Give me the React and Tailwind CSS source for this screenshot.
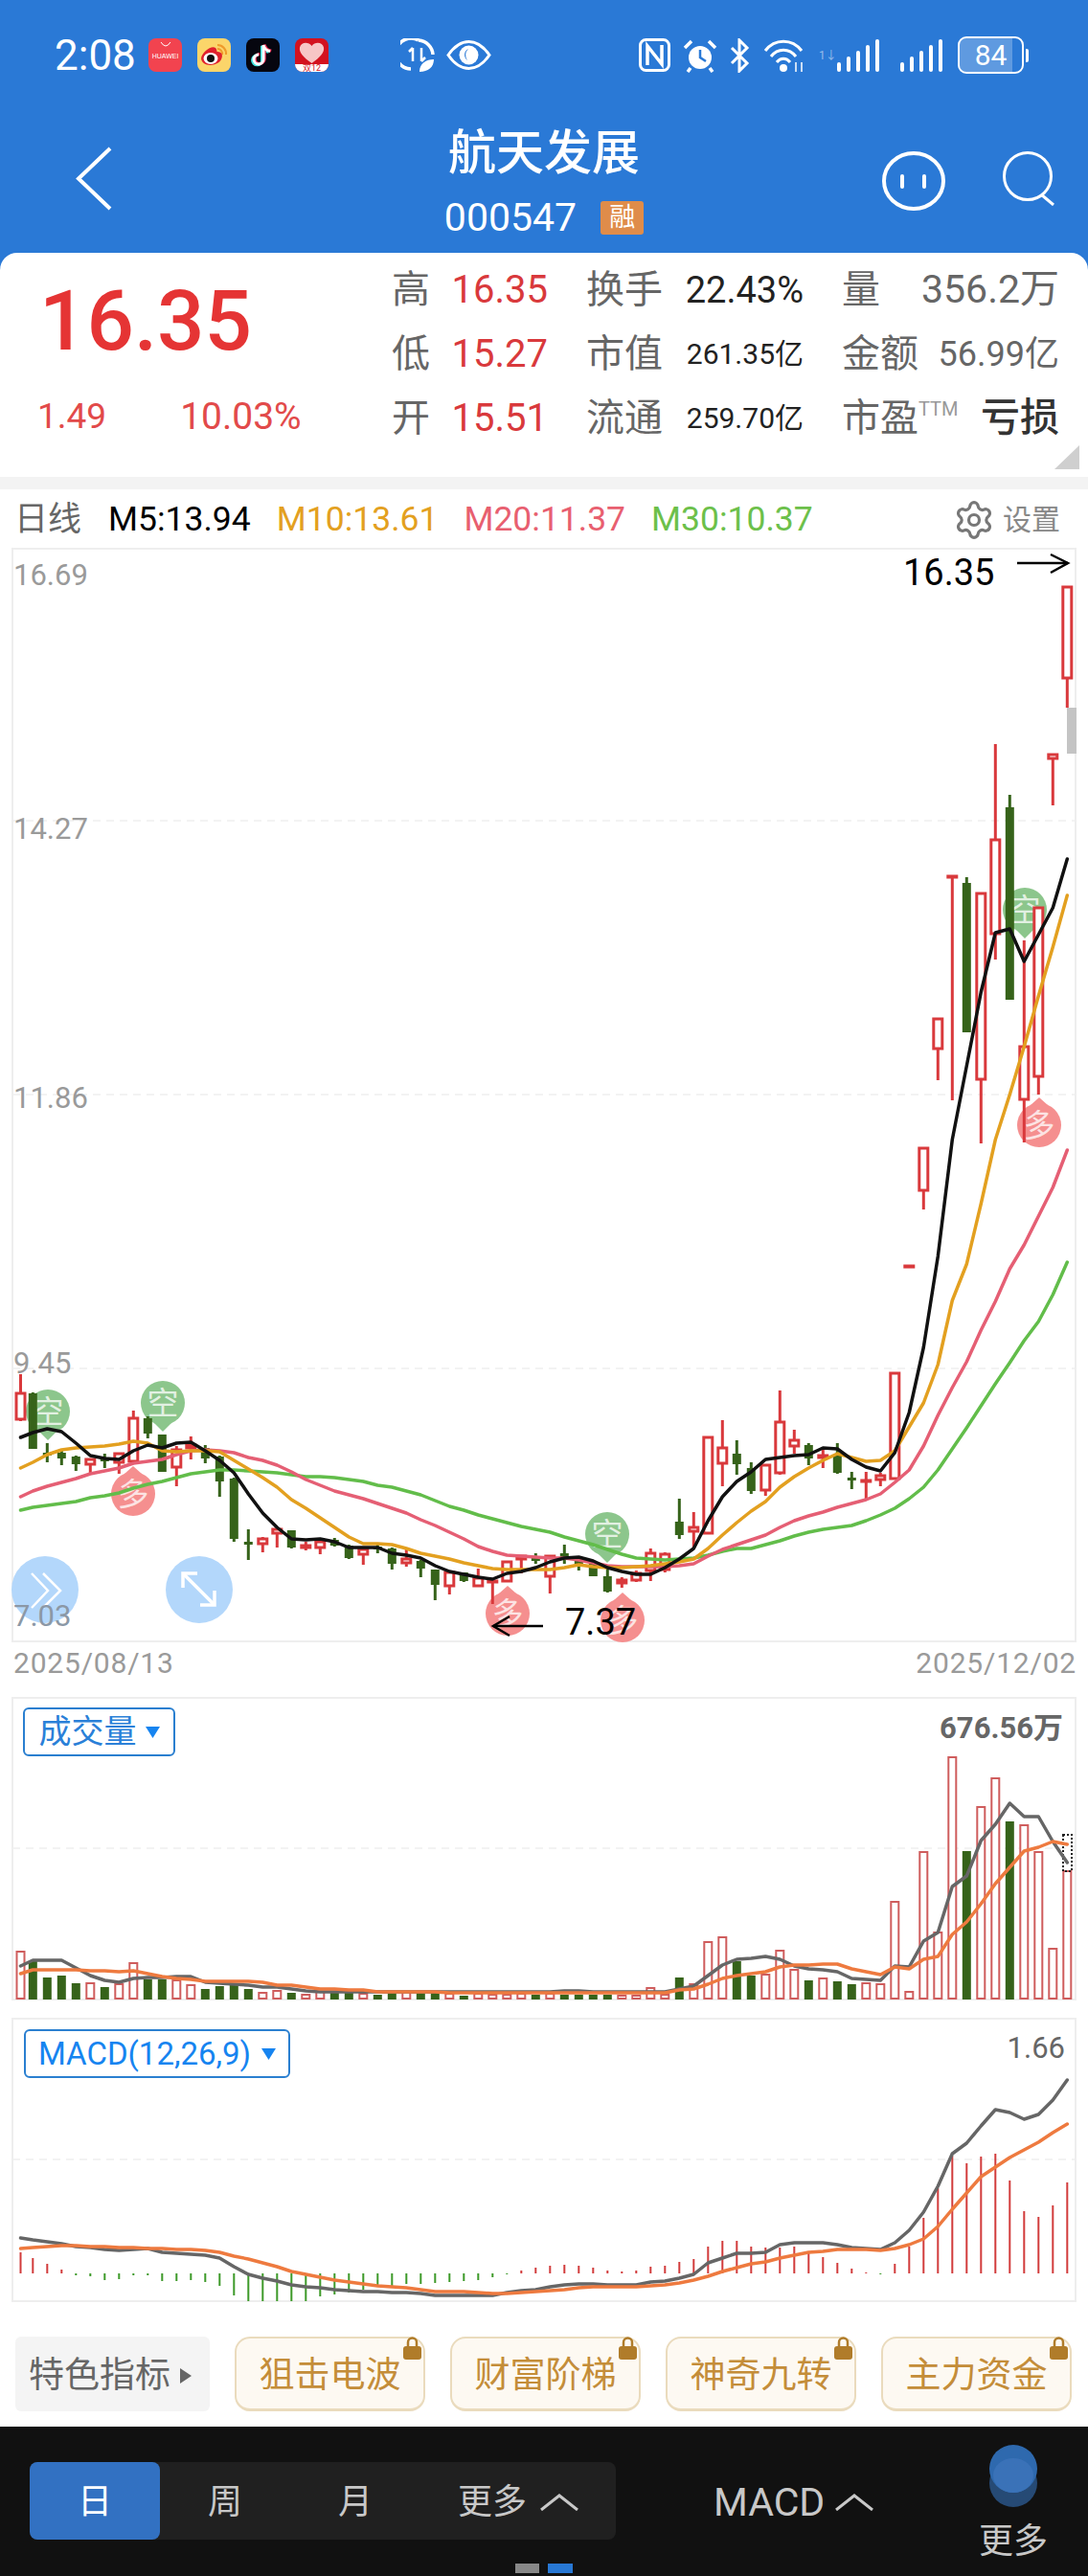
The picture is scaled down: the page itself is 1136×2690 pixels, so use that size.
import { Settings } from 'lucide-react';

const RED = '#d9393c';
const GREEN = '#36631a';

// x of the nth bar, the first one sits a bit off the 15px step
const barX = (i) => (i === 0 ? 21.5 : 19.3 + 15 * i);

// [high, top, bottom, low, colour]
const candles = [
  [1435, 1454, 1483, 1484, 'r'], [1454, 1455, 1513, 1513, 'g'], [1507, 1517, 1519, 1527, 'g'], [1513, 1517, 1523, 1530, 'g'],
  [1520, 1521, 1529, 1536, 'g'], [1523, 1523, 1530, 1539, 'r'], [1518, 1523, 1526, 1533, 'g'], [1517, 1517, 1528, 1539, 'r'],
  [1473, 1480, 1527, 1527, 'r'], [1479, 1481, 1497, 1502, 'g'], [1498, 1498, 1537, 1537, 'g'], [1510, 1513, 1533, 1552, 'r'],
  [1500, 1508, 1513, 1524, 'r'], [1509, 1512, 1523, 1528, 'g'], [1520, 1521, 1547, 1563, 'g'], [1543, 1544, 1607, 1610, 'g'],
  [1597, 1610, 1613, 1629, 'g'], [1605, 1606, 1613, 1621, 'r'], [1596, 1596, 1602, 1616, 'r'], [1598, 1598, 1616, 1617, 'g'],
  [1610, 1613, 1617, 1619, 'r'], [1607, 1609, 1617, 1623, 'r'], [1606, 1608, 1614, 1615, 'g'], [1613, 1614, 1627, 1628, 'g'],
  [1616, 1617, 1624, 1634, 'r'], [1613, 1615, 1617, 1622, 'g'], [1616, 1617, 1633, 1639, 'g'], [1617, 1627, 1633, 1636, 'r'],
  [1629, 1630, 1638, 1647, 'g'], [1639, 1639, 1655, 1671, 'g'], [1641, 1641, 1657, 1665, 'r'], [1642, 1642, 1651, 1652, 'g'],
  [1638, 1647, 1657, 1657, 'r'], [1650, 1650, 1653, 1675, 'r'], [1630, 1630, 1652, 1652, 'r'], [1624, 1624, 1629, 1643, 'r'],
  [1622, 1627, 1629, 1633, 'g'], [1624, 1624, 1647, 1664, 'r'], [1613, 1622, 1627, 1633, 'g'], [1627, 1627, 1633, 1640, 'g'],
  [1630, 1633, 1646, 1646, 'g'], [1638, 1646, 1662, 1663, 'g'], [1647, 1649, 1654, 1658, 'r'], [1640, 1642, 1651, 1652, 'r'],
  [1617, 1621, 1641, 1651, 'r'], [1621, 1622, 1640, 1642, 'r'], [1565, 1589, 1603, 1607, 'g'], [1579, 1594, 1600, 1617, 'r'],
  [1500, 1500, 1602, 1602, 'r'], [1483, 1511, 1529, 1552, 'r'], [1504, 1518, 1529, 1540, 'g'], [1527, 1533, 1557, 1560, 'g'],
  [1529, 1529, 1557, 1562, 'r'], [1452, 1484, 1539, 1540, 'r'], [1493, 1503, 1511, 1518, 'r'], [1507, 1509, 1523, 1530, 'g'],
  [1513, 1519, 1523, 1533, 'r'], [1507, 1519, 1538, 1539, 'g'], [1537, 1543, 1545, 1555, 'g'], [1537, 1545, 1548, 1567, 'r'],
  [1538, 1540, 1546, 1552, 'r'], [1433, 1433, 1545, 1545, 'r'], [1321, 1321, 1323, 1323, 'r'], [1198, 1198, 1244, 1263, 'r'],
  [1063, 1063, 1096, 1128, 'r'], [914, 914, 916, 1149, 'r'], [916, 922, 1078, 1078, 'g'], [932, 932, 1128, 1194, 'r'],
  [777, 876, 976, 1002, 'r'], [830, 843, 1044, 1044, 'g'], [982, 1092, 1149, 1193, 'r'], [947, 947, 1125, 1143, 'r'],
  [787, 787, 793, 841, 'r'], [612, 612, 709, 739, 'r'],
];

const ma5 = [1501, 1496, 1492, 1495, 1507, 1520, 1523, 1524, 1515, 1509, 1512, 1507, 1506, 1515, 1525, 1538, 1560, 1580, 1595, 1607, 1608, 1607, 1610, 1616, 1616, 1616, 1622, 1624, 1627, 1635, 1641, 1644, 1647, 1649, 1643, 1641, 1637, 1631, 1627, 1626, 1630, 1637, 1641, 1644, 1644, 1637, 1628, 1617, 1588, 1563, 1547, 1537, 1524, 1522, 1520, 1519, 1512, 1513, 1524, 1532, 1536, 1517, 1475, 1407, 1312, 1190, 1113, 1036, 974, 970, 1004, 976, 948, 897];
const ma10 = [1533, 1527, 1519, 1514, 1512, 1511, 1510, 1508, 1505, 1507, 1515, 1516, 1515, 1515, 1516, 1525, 1534, 1543, 1553, 1566, 1575, 1585, 1595, 1605, 1612, 1612, 1613, 1617, 1622, 1625, 1628, 1632, 1635, 1638, 1639, 1639, 1639, 1639, 1637, 1634, 1636, 1637, 1637, 1636, 1635, 1633, 1631, 1628, 1617, 1603, 1590, 1578, 1568, 1553, 1542, 1533, 1525, 1518, 1522, 1526, 1525, 1515, 1490, 1465, 1425, 1358, 1320, 1257, 1190, 1143, 1093, 1040, 989, 935];
const ma20 = [1563, 1557, 1552, 1548, 1544, 1539, 1536, 1533, 1528, 1526, 1524, 1519, 1515, 1514, 1515, 1517, 1522, 1525, 1530, 1537, 1545, 1551, 1557, 1561, 1565, 1570, 1575, 1580, 1587, 1593, 1600, 1607, 1615, 1620, 1624, 1625, 1626, 1627, 1627, 1629, 1632, 1635, 1636, 1636, 1636, 1636, 1635, 1633, 1625, 1618, 1613, 1608, 1603, 1595, 1588, 1583, 1579, 1574, 1570, 1566, 1560, 1548, 1535, 1510, 1478, 1449, 1422, 1389, 1359, 1325, 1300, 1270, 1240, 1201];
const ma30 = [1577, 1574, 1572, 1570, 1568, 1564, 1562, 1559, 1554, 1550, 1547, 1543, 1539, 1537, 1535, 1535, 1536, 1537, 1538, 1540, 1542, 1542, 1543, 1545, 1547, 1551, 1553, 1557, 1561, 1567, 1573, 1577, 1582, 1586, 1590, 1594, 1597, 1600, 1605, 1609, 1613, 1618, 1623, 1627, 1628, 1629, 1628, 1627, 1624, 1620, 1617, 1617, 1613, 1609, 1604, 1600, 1597, 1595, 1593, 1588, 1582, 1575, 1565, 1553, 1535, 1513, 1491, 1468, 1445, 1423, 1400, 1380, 1352, 1318];

const volume = [2038, 2048, 2065, 2063, 2071, 2071, 2075, 2072, 2050, 2067, 2067, 2068, 2073, 2077, 2074, 2072, 2077, 2081, 2079, 2081, 2083, 2080, 2080, 2080, 2082, 2083, 2080, 2080, 2080, 2080, 2082, 2084, 2082, 2083, 2083, 2082, 2083, 2082, 2083, 2083, 2083, 2083, 2084, 2084, 2076, 2083, 2065, 2072, 2028, 2023, 2048, 2063, 2062, 2037, 2057, 2068, 2066, 2069, 2072, 2071, 2072, 1986, 2080, 1934, 2018, 1835, 1933, 1887, 1857, 1902, 1906, 1934, 2035, 1954];
const volGrey = [2053, 2047, 2047, 2047, 2055, 2063, 2068, 2070, 2066, 2065, 2065, 2064, 2064, 2070, 2071, 2072, 2073, 2075, 2075, 2077, 2079, 2080, 2080, 2080, 2080, 2080, 2080, 2080, 2080, 2080, 2080, 2080, 2080, 2080, 2080, 2080, 2080, 2080, 2079, 2079, 2080, 2080, 2080, 2080, 2080, 2080, 2077, 2074, 2063, 2052, 2046, 2045, 2043, 2046, 2053, 2056, 2057, 2059, 2066, 2067, 2068, 2053, 2054, 2027, 2018, 1970, 1959, 1922, 1905, 1883, 1897, 1897, 1923, 1945];
const volOrange = [2061, 2057, 2057, 2057, 2057, 2058, 2058, 2059, 2058, 2061, 2064, 2066, 2067, 2069, 2069, 2069, 2069, 2070, 2073, 2073, 2075, 2077, 2077, 2078, 2078, 2080, 2080, 2080, 2080, 2080, 2081, 2081, 2081, 2081, 2081, 2081, 2081, 2081, 2081, 2081, 2081, 2081, 2081, 2081, 2081, 2081, 2078, 2077, 2072, 2066, 2063, 2061, 2059, 2054, 2052, 2052, 2051, 2051, 2056, 2059, 2062, 2054, 2056, 2046, 2043, 2020, 2007, 1988, 1967, 1950, 1933, 1929, 1923, 1926];

const macdBars = [2352, 2358, 2364, 2370, 2376, 2377, 2381, 2380, 2376, 2376, 2382, 2382, 2381, 2383, 2387, 2397, 2403, 2403, 2403, 2403, 2403, 2398, 2396, 2394, 2391, 2388, 2387, 2385, 2385, 2384, 2383, 2382, 2381, 2378, 2375, 2371, 2368, 2366, 2365, 2366, 2368, 2371, 2372, 2371, 2367, 2366, 2362, 2359, 2346, 2340, 2340, 2346, 2347, 2347, 2346, 2353, 2357, 2363, 2369, 2373, 2375, 2364, 2346, 2316, 2285, 2251, 2259, 2252, 2249, 2277, 2309, 2315, 2303, 2279];
const macdGrey = [2337, 2339, 2341, 2343, 2346, 2347, 2349, 2350, 2349, 2348, 2352, 2353, 2354, 2355, 2358, 2367, 2375, 2379, 2382, 2386, 2388, 2389, 2391, 2392, 2393, 2393, 2394, 2394, 2395, 2397, 2397, 2397, 2397, 2397, 2394, 2392, 2391, 2388, 2386, 2385, 2385, 2386, 2386, 2386, 2383, 2382, 2379, 2375, 2363, 2358, 2353, 2353, 2352, 2344, 2342, 2342, 2342, 2344, 2347, 2348, 2349, 2342, 2329, 2310, 2283, 2249, 2238, 2220, 2203, 2206, 2213, 2208, 2193, 2172];
const macdOrange = [2348, 2347, 2346, 2345, 2345, 2346, 2346, 2347, 2347, 2348, 2348, 2349, 2349, 2350, 2352, 2356, 2359, 2363, 2367, 2372, 2375, 2378, 2381, 2383, 2385, 2387, 2388, 2389, 2391, 2393, 2393, 2393, 2394, 2395, 2395, 2394, 2393, 2392, 2391, 2389, 2388, 2388, 2388, 2388, 2387, 2386, 2384, 2381, 2377, 2372, 2368, 2364, 2362, 2358, 2355, 2352, 2351, 2349, 2349, 2349, 2350, 2348, 2344, 2338, 2325, 2307, 2290, 2273, 2263, 2253, 2245, 2237, 2227, 2218];

const line = (ys) => ys.map((y, i) => `${barX(i)},${y}`).join(' ');

const Path = ({ ys, color, width = 3.5 }) => (
  <polyline points={line(ys)} fill="none" stroke={color} strokeWidth={width} strokeLinejoin="round" strokeLinecap="round" />
);

const Candle = ({ c, i }) => {
  const [hi, top, bot, lo, kind] = c;
  const x = barX(i);
  if (kind === 'g') {
    return (
      <g fill={GREEN}>
        <rect x={x - 1.5} y={hi} width="3" height={lo - hi} />
        <rect x={x - 4.5} y={top} width="9" height={Math.max(bot - top, 3)} />
      </g>
    );
  }
  return (
    <g>
      <rect x={x - 1.5} y={hi} width="3" height={lo - hi} fill={RED} />
      <rect x={x - 4.5} y={top + 1} width="9" height={Math.max(bot - top - 2, 1)} fill="#fff" stroke={RED} strokeWidth="3" />
    </g>
  );
};

const Pin = ({ x, y, kind }) => {
  const up = kind === 'duo';
  const color = up ? '#f58f8f' : '#8cc68c';
  const tip = up ? y - 29 : y + 30;
  const base = up ? y - 21 : y + 21;
  return (
    <g>
      <circle cx={x} cy={y} r="23" fill={color} />
      <polygon points={`${x - 9},${base} ${x + 9},${base} ${x},${tip}`} fill={color} />
      <text x={x} y={y + 12} textAnchor="middle" fontSize="33" fill="#fff" fillOpacity="0.75">
        {up ? '多' : '空'}
      </text>
    </g>
  );
};

const Grid = ({ ys }) =>
  ys.map((y) => <line key={y} x1="13" x2="1123" y1={y} y2={y} stroke="#f0f0f0" strokeWidth="1.5" strokeDasharray="8 6" />);

const Frame = ({ top, bottom }) => (
  <rect x="13" y={top} width="1110" height={bottom - top} fill="none" stroke="#eeeeee" strokeWidth="2" />
);

const axisLabels = [
  ['16.69', 611],
  ['14.27', 876],
  ['11.86', 1157],
  ['9.45', 1434],
];

const MainChart = () => (
  <svg width="1136" height="1143" viewBox="0 572 1136 1143" className="block">
    <Frame top={573} bottom={1714} />
    <Grid ys={[857, 1143, 1429]} />
    {axisLabels.map(([t, y]) => (
      <text key={t} x="14" y={y} fontSize="31" fill="#9a9a9a">{t}</text>
    ))}
    <rect x="1114" y="739" width="10" height="48" fill="#c4c4c4" />
    <Pin x={50} y={1474} kind="kong" />
    <Pin x={170} y={1465} kind="kong" />
    <Pin x={139} y={1560} kind="duo" />
    <Pin x={634} y={1602} kind="kong" />
    <Pin x={530} y={1685} kind="duo" />
    <Pin x={650} y={1692} kind="duo" />
    <Pin x={1070} y={950} kind="kong" />
    <Pin x={1085} y={1175} kind="duo" />
    {candles.map((c, i) => <Candle key={i} c={c} i={i} />)}
    <Path ys={ma30} color="#62bd4a" />
    <Path ys={ma20} color="#e55f74" />
    <Path ys={ma10} color="#e3a020" />
    <Path ys={ma5} color="#111111" />

    <circle cx="47" cy="1660" r="35" fill="#b3d7fb" />
    <polyline points="33,1643 50,1661 33,1679" fill="none" stroke="#fff" strokeWidth="2.5" />
    <polyline points="45,1643 63,1661 45,1679" fill="none" stroke="#fff" strokeWidth="2.5" />
    <circle cx="208" cy="1660" r="35" fill="#b3d7fb" />
    <g fill="none" stroke="#fff" strokeWidth="3.5">
      <line x1="192" y1="1644" x2="224" y2="1676" />
      <polyline points="191,1658 191,1643 206,1643" />
      <polyline points="209,1676 224,1676 224,1661" />
    </g>
    <text x="14" y="1698" fontSize="31" fill="#8b98a6">7.03</text>

    <text x="943" y="611" fontSize="38" fill="#000">16.35</text>
    <g fill="none" stroke="#000" strokeWidth="2.5">
      <polyline points="1062,588 1115,588" />
      <polyline points="1097,579 1115,588 1097,598" />
      <polyline points="567,1698 515,1698" />
      <polyline points="532,1688 515,1698 532,1708" />
    </g>
    <text x="590" y="1707" fontSize="38" fill="#000">7.37</text>
  </svg>
);

const VolumeChart = () => (
  <svg width="1136" height="318" viewBox="0 1772 1136 318" className="block">
    <Frame top={1773} bottom={2088} />
    <Grid ys={[1930]} />
    {volume.map((top, i) =>
      candles[i][4] === 'g' ? (
        <rect key={i} x={barX(i) - 4.5} y={top} width="9" height={2088 - top} fill={GREEN} />
      ) : (
        <rect key={i} x={barX(i) - 4} y={top} width="8" height={2087 - top} fill="#fff" stroke="#cf5d5d" strokeWidth="2" />
      )
    )}
    <rect x="1110" y="1916" width="9" height="38" fill="none" stroke="#222" strokeWidth="2" strokeDasharray="2 2" />
    <Path ys={volGrey} color="#666666" />
    <Path ys={volOrange} color="#ee7a3f" />
    <text x="1110" y="1815" textAnchor="end" fontSize="31" fontWeight="700" fill="#666">676.56万</text>
  </svg>
);

const MacdChart = () => (
  <svg width="1136" height="298" viewBox="0 2107 1136 298" className="block">
    <Frame top={2108} bottom={2403} />
    <Grid ys={[2255]} />
    {macdBars.map((top, i) => (
      <rect
        key={i}
        x={barX(i) - 1}
        y={Math.min(top, 2374)}
        width="2"
        height={Math.abs(top - 2374)}
        fill={top < 2374 ? '#d23c3c' : '#3e9a2a'}
      />
    ))}
    <Path ys={macdGrey} color="#666666" />
    <Path ys={macdOrange} color="#ee7a3f" />
    <text x="1112" y="2149" textAnchor="end" fontSize="31" fill="#666">1.66</text>
  </svg>
);

const Tag = ({ w, children, className }) => (
  <div className={`absolute flex items-center justify-center h-[51px] border-2 border-[#2a7fd0] rounded-[6px] bg-white ${w} ${className}`}>
    {children}
  </div>
);

const Tri = () => (
  <svg width="15" height="12" viewBox="0 0 15 12" className="shrink-0">
    <polygon points="0,0 15,0 7.5,12" fill="#1684f0" />
  </svg>
);

const Lock = () => (
  <svg width="19" height="24" viewBox="0 0 19 24" className="absolute top-[-2px] right-[2px]">
    <path d="M5 11 V6 a4.5 4.5 0 0 1 9 0 V11" fill="none" stroke="#b07c2a" strokeWidth="2.5" />
    <rect x="0" y="10" width="19" height="14" rx="3" fill="#b07c2a" />
  </svg>
);

const Up = ({ color = '#c8c8c8' }) => (
  <svg width="40" height="18" viewBox="0 0 40 18">
    <polyline points="1,17 20,2 39,17" fill="none" stroke={color} strokeWidth="3" />
  </svg>
);

const Bars = () => (
  <svg width="46" height="36" viewBox="0 0 46 36" fill="#fff">
    <rect x="1" y="25" width="4" height="10" rx="2" />
    <rect x="11" y="19" width="4" height="16" rx="2" />
    <rect x="21" y="13" width="4" height="22" rx="2" />
    <rect x="31" y="7" width="4" height="28" rx="2" />
    <rect x="41" y="1" width="4" height="34" rx="2" />
  </svg>
);

const StatusBar = () => (
  <div className="flex items-center justify-between h-[39px] pl-[57px] pr-[62px] text-white">
    <div className="flex items-center">
      <span className="text-[44px] leading-none w-[98px]">2:08</span>
      <div className="flex gap-[16px]">
        <div className="w-[35px] h-[35px] rounded-[8px] bg-[#f2434f] flex flex-col items-center pt-[3px]">
          <svg width="12" height="7" viewBox="0 0 12 7"><path d="M1 1 Q6 9 11 1" fill="none" stroke="#fff" strokeWidth="1" /></svg>
          <span className="text-[7px] leading-[8px] mt-[5px] font-['Liberation_Sans']">HUAWEI</span>
        </div>
        <svg width="35" height="35" viewBox="0 0 35 35">
          <rect width="35" height="35" rx="8" fill="#fbd56a" />
          <path d="M21 7 a9 9 0 0 1 9 10 M21 11 a5 5 0 0 1 5 6" fill="none" stroke="#ef9a2b" strokeWidth="2" />
          <path d="M4 21 C5 14 15 7 19 10 C21 12 20 14 21 14 C26 14 27 18 25 22 C22 29 5 31 4 21 Z" fill="#e0202c" />
          <ellipse cx="14" cy="21" rx="7.5" ry="6" fill="#fff" />
          <circle cx="14" cy="21" r="4" fill="#111" />
        </svg>
        <svg width="35" height="35" viewBox="0 0 35 35">
          <rect width="35" height="35" rx="8" fill="#06060f" />
          <path d="M18 7 V22 a5 5 0 1 1 -5 -5 M18 7 c1 4 4 6 7 6.500" transform="translate(-1.500 0.800)" fill="none" stroke="#3fe3e0" strokeWidth="3" />
          <path d="M18 7 V22 a5 5 0 1 1 -5 -5 M18 7 c1 4 4 6 7 6.500" transform="translate(1.200 -0.500)" fill="none" stroke="#f0345a" strokeWidth="3" />
          <path d="M18 7 V22 a5 5 0 1 1 -5 -5 M18 7 c1 4 4 6 7 6.500" fill="none" stroke="#fff" strokeWidth="3" />
        </svg>
        <svg width="35" height="35" viewBox="0 0 35 35">
          <rect width="35" height="35" rx="8" fill="#d3121f" />
          <path d="M17.500 26 C9 20 4 15 5 9.500 C6 4 14 3 17.500 8 C21 3 29 4 30 9.500 C31 15 26 20 17.500 26 Z" fill="#f7c6c6" />
          <path d="M0 27 H35 V27 A8 8 0 0 1 27 35 H8 A8 8 0 0 1 0 27 Z" fill="#fff" />
          <text x="17.500" y="34" textAnchor="middle" fontSize="9" fill="#d3121f">双12</text>
        </svg>
      </div>
      <div className="flex items-center gap-[12px] ml-[75px]">
        <svg width="36" height="36" viewBox="0 0 36 36">
          <path d="M19 2 A16 16 0 1 0 11 32" fill="none" stroke="#fff" strokeWidth="3.500" />
          <path d="M19 2 A16 16 0 0 1 34 17" fill="none" stroke="#fff" strokeWidth="3.500" />
          <path d="M13 10 V24 M13 10 L9 14 M22 10 V24 M22 24 L26 20" fill="none" stroke="#fff" strokeWidth="2.500" />
          <path d="M20 35 C20 26 27 22 35 22 C35 30 29 35 20 35 Z" fill="#fff" />
        </svg>
        <svg width="47" height="31" viewBox="0 0 47 31">
          <path d="M2 15.500 C10 4 17 1.500 23.500 1.500 C30 1.500 37 4 45 15.500 C37 27 30 29.500 23.500 29.500 C17 29.500 10 27 2 15.500 Z" fill="none" stroke="#fff" strokeWidth="3" />
          <circle cx="23.500" cy="15.500" r="10" fill="#fff" />
          <path d="M23 9 a7 7 0 0 0 -1 12 a9 9 0 0 1 1 -12 Z" fill="#2a79d6" />
        </svg>
      </div>
    </div>
    <div className="flex items-center">
      <svg width="33" height="35" viewBox="0 0 33 35">
        <rect x="1.500" y="1.500" width="30" height="32" rx="6" fill="none" stroke="#fff" strokeWidth="3" />
        <path d="M9 28 V8 L24 27 V7" fill="none" stroke="#fff" strokeWidth="3.500" />
      </svg>
      <svg width="36" height="36" viewBox="0 0 36 36" className="ml-[13px]">
        <circle cx="18" cy="20" r="12" fill="#fff" />
        <path d="M18 12 V20 L24 24" fill="none" stroke="#2a79d6" strokeWidth="2.500" />
        <path d="M2 10 L9 3 M34 10 L27 3 M8 31 L5 35 M28 31 L31 35" stroke="#fff" strokeWidth="3.500" />
      </svg>
      <svg width="22" height="36" viewBox="0 0 22 36" className="ml-[12px]">
        <polyline points="3,10 19,26 11,34 11,2 19,10 3,26" fill="none" stroke="#fff" strokeWidth="3" />
      </svg>
      <svg width="44" height="36" viewBox="0 0 44 36" className="ml-[14px]">
        <g fill="none" stroke="#fff" strokeWidth="3">
          <path d="M2 13 C12 0 30 0 40 13" />
          <path d="M8 19 C15 10 27 10 34 19" />
          <path d="M14 25 C18 20 24 20 28 25" />
        </g>
        <circle cx="21" cy="31" r="4" fill="#fff" />
        <path d="M34 25 V35 M40 25 V35" stroke="#fff" strokeWidth="1.500" />
      </svg>
      <span className="ml-[14px] w-[18px] text-[12px] leading-none text-white/50">1↓</span>
      <Bars />
      <div className="ml-[20px]"><Bars /></div>
      <div className="relative ml-[15px] flex items-center justify-center w-[69px] h-[39px] border-[2.5px] border-white rounded-[9px] overflow-hidden">
        <div className="absolute left-0 top-0 bottom-0 w-[84%] bg-white/25" />
        <span className="relative text-[30px] leading-none">84</span>
      </div>
      <div className="ml-[2px] w-[3px] h-[14px] bg-white rounded-r-[2px]" />
    </div>
  </div>
);

const NavBar = () => (
  <div className="grid grid-cols-[1fr_auto_1fr] h-[187px] text-white">
    <div className="pl-[79px] pt-[76px]">
      <svg width="38" height="67" viewBox="0 0 38 67">
        <polyline points="36,2 3,33.500 36,65" fill="none" stroke="#fff" strokeWidth="4" />
      </svg>
    </div>
    <div className="flex flex-col items-center pt-[58px]">
      <div className="text-[50px] leading-[50px] font-medium">航天发展</div>
      <div className="flex items-center gap-[25px] mt-[24px]">
        <span className="text-[41px] leading-[36px]">000547</span>
        <span className="flex items-center justify-center w-[45px] h-[35px] bg-[#df8c4a] rounded-[3px] text-[27px] leading-none">融</span>
      </div>
    </div>
    <div className="flex justify-end items-start gap-[60px] pr-[35px] pt-[81px]">
      <svg width="66" height="62" viewBox="0 0 66 62">
        <ellipse cx="33" cy="31" rx="31" ry="29" fill="none" stroke="#fff" strokeWidth="4" />
        <line x1="21" y1="26" x2="21" y2="37" stroke="#fff" strokeWidth="4" strokeLinecap="round" />
        <line x1="44" y1="26" x2="44" y2="37" stroke="#fff" strokeWidth="4" strokeLinecap="round" />
      </svg>
      <svg width="54" height="57" viewBox="0 0 54 57">
        <circle cx="26" cy="26" r="24.500" fill="none" stroke="#fff" strokeWidth="3" />
        <line x1="40" y1="45" x2="53" y2="56" stroke="#fff" strokeWidth="3" />
      </svg>
    </div>
  </div>
);

const quotes = [
  { a: '高', b: '16.35', c: '换手', d: '22.43%', dSize: 'text-[38px]', e: '量', f: '356.2万', fClass: 'text-[41px] text-[#666]' },
  { a: '低', b: '15.27', c: '市值', d: '261.35亿', dSize: 'text-[30px]', e: '金额', f: '56.99亿', fClass: 'text-[36px] text-[#666]' },
  { a: '开', b: '15.51', c: '流通', d: '259.70亿', dSize: 'text-[30px]', e: '市盈', sup: true, f: '亏损', fClass: 'text-[41px] text-[#333] font-medium' },
];

const QuoteCard = () => (
  <div className="relative flex h-[234px] bg-white rounded-t-[18px]">
    <div className="w-[409px] shrink-0">
      <div className="pl-[41px] pt-[26px] text-[87px] leading-[90px] font-medium text-[#e53434]">16.35</div>
      <div className="flex gap-[77px] pl-[39px] mt-[37px] text-[37px] leading-[36px] text-[#e24a4a]">
        <span>1.49</span>
        <span className="text-[39px]">10.03%</span>
      </div>
    </div>
    <div className="grid grid-cols-[163px_227px_227px] gap-x-[40px] auto-rows-[67px] pt-[5px] items-center text-[40px] leading-none text-[#666]">
      {quotes.map((q) => [
        <div key={q.a} className="flex justify-between items-center">
          <span>{q.a}</span>
          <span className="text-[#d9393c]">{q.b}</span>
        </div>,
        <div key={q.c} className="flex justify-between items-center">
          <span>{q.c}</span>
          <span className={`${q.dSize} text-[#222]`}>{q.d}</span>
        </div>,
        <div key={q.e} className="flex justify-between items-center">
          <span className="flex items-start">
            {q.e}
            {q.sup && <span className="text-[20px] leading-none text-[#999]">TTM</span>}
          </span>
          <span className={q.fClass}>{q.f}</span>
        </div>,
      ])}
    </div>
    <svg width="26" height="25" viewBox="0 0 26 25" className="absolute right-[9px] bottom-[8px]">
      <polygon points="26,0 26,25 0,25" fill="#cfcfcf" />
    </svg>
  </div>
);

const maLegend = [
  ['M5:13.94', 'text-black'],
  ['M10:13.61', 'text-[#e3a020]'],
  ['M20:11.37', 'text-[#e85f70]'],
  ['M30:10.37', 'text-[#6cc04a]'],
];

const ChartHeader = () => (
  <div className="flex items-center h-[61px] pl-[15px] pr-[29px] pt-[2px] text-[35px] leading-none">
    <span className="text-[#666] mr-[28px]">日线</span>
    <div className="flex gap-[27px] text-[35.500px]">
      {maLegend.map(([t, c]) => <span key={t} className={c}>{t}</span>)}
    </div>
    <div className="flex items-center gap-[8px] ml-auto text-[30px] text-[#888]">
      <Settings size={44} strokeWidth={1.75} color="#777777" />
      <span>设置</span>
    </div>
  </div>
);

const gold = ['狙击电波', '财富阶梯', '神奇九转', '主力资金'];

const Indicators = () => (
  <div className="flex items-stretch h-[78px] mt-[35px] pl-[16px] gap-[26px] text-[37px] leading-none">
    <div className="flex items-center w-[203px] pl-[14px] pt-[3px] gap-[10px] bg-[#f4f4f4] rounded-[6px] text-[#666] whitespace-nowrap">
      特色指标
      <svg width="12" height="16" viewBox="0 0 12 16" className="shrink-0"><polygon points="0,0 12,8 0,16" fill="#666" /></svg>
    </div>
    <div className="flex gap-[26px]">
      {gold.map((t) => (
        <div key={t} className="relative flex items-center justify-center w-[199px] pt-[3px] bg-[#fdf9f2] border-2 border-b-[3px] border-[#eadbbd] rounded-[16px] text-[#c48d39]">
          {t}
          <Lock />
        </div>
      ))}
    </div>
  </div>
);

const BottomBar = () => (
  <div className="relative flex items-start h-[156px] mt-[16px] bg-[#111111] text-[#c8c8c8] text-[36px] leading-none">
    <div className="flex items-center w-[612px] h-[81px] ml-[31px] mt-[37px] bg-[#202020] rounded-[8px]">
      <div className="flex items-center justify-center w-[136px] h-full pt-[2px] bg-[#3271c2] rounded-[8px] text-white">日</div>
      <div className="flex items-center justify-center w-[136px] pt-[2px]">周</div>
      <div className="flex items-center justify-center w-[136px] pt-[2px]">月</div>
      <div className="flex items-center justify-center flex-1 gap-[14px] pt-[2px]">
        更多
        <Up />
      </div>
    </div>
    <div className="flex items-center gap-[11px] ml-[102px] mt-[37px] pt-[3px] h-[81px] text-[41px]">
      MACD
      <Up />
    </div>
    <div className="flex flex-col items-center ml-auto mr-[42px] pt-[19px]">
      <svg width="50" height="65" viewBox="0 0 50 65">
        <circle cx="25" cy="40" r="25" fill="#264a75" />
        <circle cx="25" cy="25" r="25" fill="#2e69ae" />
        <ellipse cx="25" cy="32" rx="21" ry="18" fill="#3a72b8" />
      </svg>
      <span className="mt-[18px]">更多</span>
    </div>
    <div className="absolute left-[538px] bottom-[3px] flex gap-[9px]">
      <div className="w-[25px] h-[10px] bg-[#888888]" />
      <div className="w-[26px] h-[10px] bg-[#2878d4]" />
    </div>
  </div>
);

export default function App() {
  return (
    <div className="w-[1136px] h-[2690px] overflow-hidden bg-white font-['Roboto','Noto_Sans_CJK_SC',sans-serif]">
      <div className="bg-[#2a79d6] pt-[38px]">
        <StatusBar />
        <NavBar />
        <QuoteCard />
      </div>
      <div className="h-[13px] bg-[#f3f3f3]" />
      <ChartHeader />
      <MainChart />
      <div className="flex justify-between h-[57px] pt-[7px] pl-[14px] pr-[12px] text-[30px] leading-[30px] text-[#9a9a9a] tracking-[0.8px]">
        <span>2025/08/13</span>
        <span>2025/12/02</span>
      </div>
      <div className="relative">
        <VolumeChart />
        <Tag w="w-[159px]" className="left-[24px] top-[11px] gap-[9px] text-[34px] text-[#2a80d8]">
          成交量
          <Tri />
        </Tag>
      </div>
      <div className="relative mt-[17px]">
        <MacdChart />
        <Tag w="w-[278px]" className="left-[25px] top-[12px] gap-[11px] text-[33px] text-[#1684f0]">
          MACD(12,26,9)
          <Tri />
        </Tag>
      </div>
      <Indicators />
      <BottomBar />
    </div>
  );
}
